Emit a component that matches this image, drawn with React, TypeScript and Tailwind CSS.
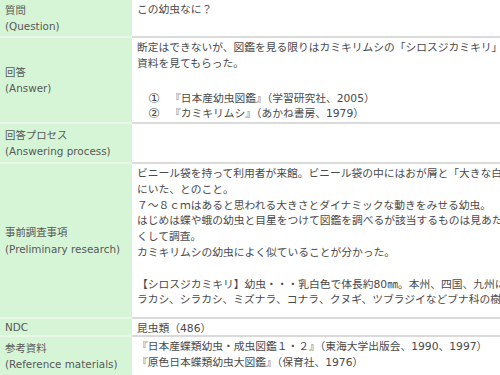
import React from "react";

const font = { fontFamily: '"DejaVu Sans", "Noto Sans CJK JP", sans-serif' };

function Label({ ja, en }: { ja: string; en?: string }) {
  return (
    <div className="w-[132px] shrink-0 bg-[#d6f5d6] border-b-2 border-[#e8f7e8] flex flex-col justify-center pl-[5px] text-[10.4px] leading-[16.5px] text-[#585858]">
      <div className="whitespace-nowrap">{ja}</div>
      {en && <div className="whitespace-nowrap">{en}</div>}
    </div>
  );
}

function Body({ lines, className = "" }: { lines: React.ReactNode[]; className?: string }) {
  return (
    <div className={`flex-1 min-w-0 overflow-hidden border-b-2 border-[#dadada] pl-[5px] pt-[2px] text-[10.75px] leading-[15.8px] text-[#4a4a4a] ${className}`}>
      {lines.map((l, i) => (
        <div key={i} className="whitespace-nowrap h-[15.8px]">
          {l}
        </div>
      ))}
    </div>
  );
}

const Item = ({ mark, text }: { mark: string; text: string }) => (
  <span className="inline-flex items-center">
    <span className="w-[11px]" />
    <span className="w-[11px] text-center text-[13.5px] leading-[15.8px]">{mark}</span>
    <span className="w-[11px]" />
    <span>{text}</span>
  </span>
);

export default function App() {
  return (
    <div className="w-[500px] h-[375px] overflow-hidden bg-white" style={font}>
      <div className="flex h-[38px]">
        <Label ja="質問" en="(Question)" />
        <Body lines={["この幼虫なに？"]} />
      </div>
      <div className="flex h-[86px]">
        <Label ja="回答" en="(Answer)" />
        <Body
          lines={[
            "断定はできないが、図鑑を見る限りはカミキリムシの「シロスジカミキリ」",
            "資料を見てもらった。",
            "",
            <Item mark="①" text="『日本産幼虫図鑑』（学習研究社、2005）" />,
            <Item mark="②" text="『カミキリムシ』（あかね書房、1979）" />,
          ]}
        />
      </div>
      <div className="flex h-[40px]">
        <Label ja="回答プロセス" en="(Answering process)" />
        <Body lines={[]} />
      </div>
      <div className="flex h-[155px]">
        <Label ja="事前調査事項" en="(Preliminary research)" />
        <Body
          lines={[
            "ビニール袋を持って利用者が来館。ビニール袋の中にはおが屑と「大きな白",
            "にいた、とのこと。",
            "７〜８ｃｍはあると思われる大きさとダイナミックな動きをみせる幼虫。",
            "はじめは蝶や蛾の幼虫と目星をつけて図鑑を調べるが該当するものは見あた",
            "くして調査。",
            "カミキリムシの幼虫によく似ていることが分かった。",
            "",
            "【シロスジカミキリ】幼虫・・・乳白色で体長約80㎜。本州、四国、九州に",
            "ラカシ、シラカシ、ミズナラ、コナラ、クヌギ、ツブラジイなどブナ科の樹",
          ]}
        />
      </div>
      <div className="flex h-[18px]">
        <Label ja="NDC" />
        <Body lines={["昆虫類（486）"]} className="pt-0" />
      </div>
      <div className="flex h-[40px]">
        <Label ja="参考資料" en="(Reference materials)" />
        <Body
          lines={[
            "『日本産蝶類幼虫・成虫図鑑１・２』（東海大学出版会、1990、1997）",
            "『原色日本蝶類幼虫大図鑑』（保育社、1976）",
          ]}
        />
      </div>
    </div>
  );
}
